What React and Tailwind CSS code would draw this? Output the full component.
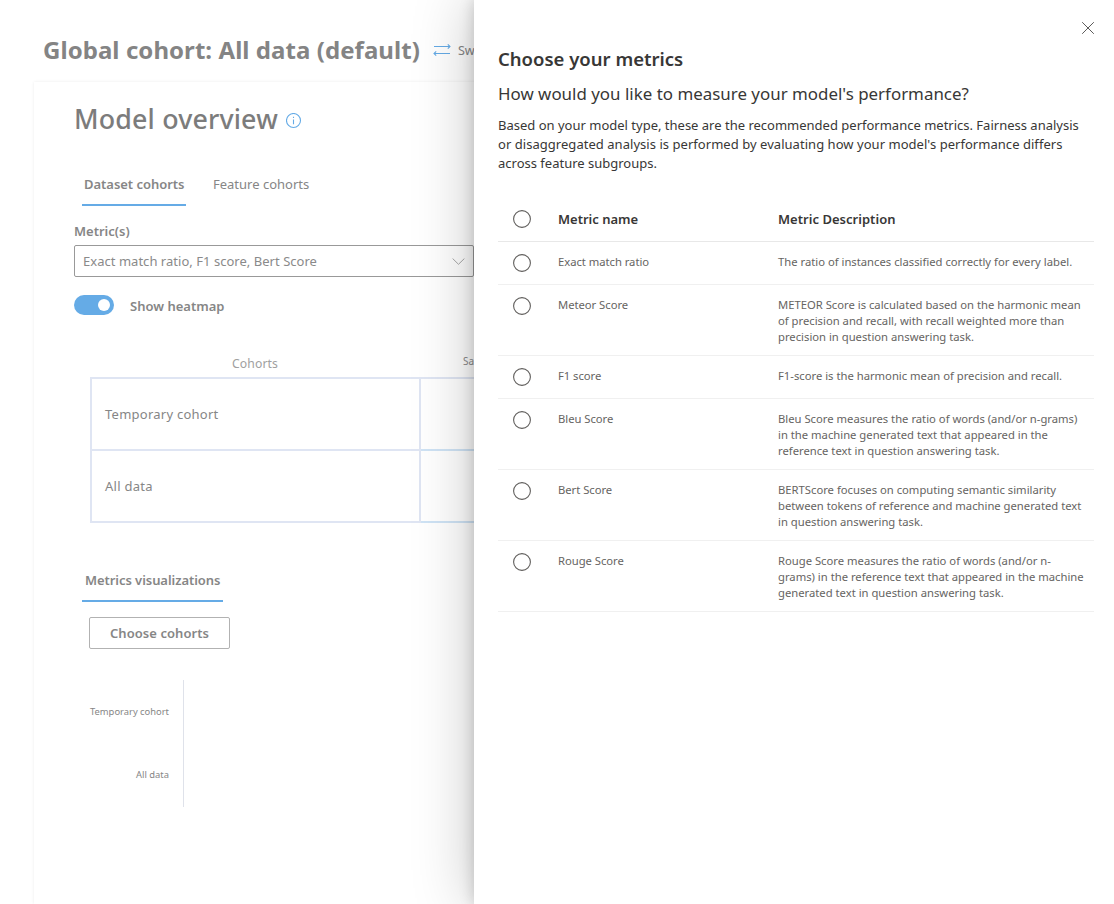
const metrics = [
  { name: 'Exact match ratio', lines: ['The ratio of instances classified correctly for every label.'] },
  {
    name: 'Meteor Score',
    lines: [
      'METEOR Score is calculated based on the harmonic mean',
      'of precision and recall, with recall weighted more than',
      'precision in question answering task.',
    ],
  },
  { name: 'F1 score', lines: ['F1-score is the harmonic mean of precision and recall.'] },
  {
    name: 'Bleu Score',
    lines: [
      'Bleu Score measures the ratio of words (and/or n-grams)',
      'in the machine generated text that appeared in the',
      'reference text in question answering task.',
    ],
  },
  {
    name: 'Bert Score',
    lines: [
      'BERTScore focuses on computing semantic similarity',
      'between tokens of reference and machine generated text',
      'in question answering task.',
    ],
  },
  {
    name: 'Rouge Score',
    lines: [
      'Rouge Score measures the ratio of words (and/or n-',
      'grams) in the reference text that appeared in the machine',
      'generated text in question answering task.',
    ],
  },
];

function Radio() {
  return (
    <svg className="ml-[15px] block h-[18px] w-[18px] shrink-0" viewBox="0 0 18 18" fill="none" stroke="#605e5c" strokeWidth="1.1">
      <circle cx="9" cy="9" r="8.4" />
    </svg>
  );
}

function CohortRow({ label }) {
  return (
    <div className="flex h-[72px]">
      <div className="flex w-[329px] items-center border-b-2 border-r-2 border-[#dfe5f3] pl-[13px] text-[13px] leading-5 tracking-[0.25px] text-[#868686]">
        {label}
      </div>
      <div className="flex-1 border-b-2 border-[#cfe3f5]" />
    </div>
  );
}

function Background() {
  return (
    <div className="w-[474px] shrink-0 overflow-hidden pl-[34px] pt-[34px] text-[#868686]">
      <div className="flex h-12 items-start whitespace-nowrap pl-[9px]">
        <h1 className="text-[24px] font-bold leading-8 tracking-[0.06px] text-[#848484]">Global cohort: All data (default)</h1>
        <svg className="ml-[13px] mt-[9px] h-[14px] w-[18px] shrink-0" viewBox="0 0 18 14" fill="none" stroke="#65abe6" strokeWidth="1.1">
          <path d="M1 3.5h16M14.8 1.3l2.2 2.2L14.8 5.7M17 10.5H1M3.2 8.3L1 10.5 3.2 12.7" />
        </svg>
        <span className="ml-[7px] mt-[7px] text-[12.6px] leading-5">Sw</span>
      </div>

      <div className="h-[822px] w-[900px] bg-white pl-10 pt-[19px] shadow-[0_0_3px_rgba(0,0,0,0.08)]">
        <div className="flex h-9 items-start">
          <h2 className="text-[26.8px] font-medium leading-9 tracking-[0.16px] text-[#7c7c7c]">Model overview</h2>
          <svg className="ml-2 mt-3 h-4 w-4" viewBox="0 0 16 16" fill="none" stroke="#65abe6" strokeWidth="1.1">
            <circle cx="7.5" cy="7.5" r="7" />
            <path d="M7.5 6.4v4.8M7.5 3.8v1.2" />
          </svg>
        </div>

        <div className="mt-[37px] flex h-8 pl-2 text-[13px] leading-5">
          <div className="w-[104px] border-b-2 border-[#65abe6] pl-0.5 font-semibold tracking-[-0.03px]">Dataset cohorts</div>
          <div className="ml-[27px]">Feature cohorts</div>
        </div>

        <div className="mt-[15px] text-[13px] font-semibold leading-5">Metric(s)</div>
        <div className="mt-1 flex h-8 w-[400px] items-center justify-between rounded-[2px] border border-[#999] pl-2 pr-2">
          <span className="text-[13px] leading-5 tracking-[0.03px] text-[#8a8a8a]">Exact match ratio, F1 score, Bert Score</span>
          <svg className="h-[7px] w-[13px]" viewBox="0 0 13 7" fill="none" stroke="#a8a8a8" strokeWidth="1">
            <path d="M0.6 0.5l5.9 5.8L12.4 0.5" />
          </svg>
        </div>

        <div className="mt-[18px] flex h-[21px] items-start">
          <div className="flex h-5 w-10 items-center justify-end rounded-full bg-[#65abe6] pr-1">
            <div className="h-3 w-3 rounded-full bg-white" />
          </div>
          <span className="ml-4 mt-px text-[13px] font-semibold leading-5">Show heatmap</span>
        </div>

        <div className="ml-4 mt-[39px] w-[700px]">
          <div className="flex h-[22px] items-start">
            <div className="w-[330px] pt-px text-center text-[12.2px] leading-4 tracking-[0.1px] text-[#a0a0a0]">Cohorts</div>
            <div className="pl-[43px] text-[10px] leading-[13px] text-[#8a8a8a]">Sa</div>
          </div>
          <div className="border-l-2 border-t-2 border-[#dfe5f3]">
            <CohortRow label="Temporary cohort" />
            <CohortRow label="All data" />
          </div>
        </div>

        <div className="ml-2 mt-[47px] h-8 w-[141px] border-b-2 border-[#65abe6] pl-[3px] text-[13px] font-semibold leading-5 tracking-[-0.06px]">
          Metrics visualizations
        </div>
        <div className="ml-[15px] mt-[15px] flex h-8 w-[141px] items-center justify-center rounded-[2px] border border-[#b2b2b2] text-[13px] font-semibold leading-5 tracking-[0.06px]">
          Choose cohorts
        </div>

        <div className="mt-[31px] flex h-[127px] w-[110px] flex-col items-end border-r border-[#dfe2ea] pr-[14px] pt-[25px] text-[9.4px] leading-[13px]">
          <span className="h-[63px]">Temporary cohort</span>
          <span>All data</span>
        </div>
      </div>
    </div>
  );
}

function MetricsPanel() {
  return (
    <aside className="relative z-10 flex w-[640px] shrink-0 flex-col bg-white pl-6 pr-5 text-[#383736] shadow-[0_0_58px_rgba(0,0,0,0.24),0_0_14px_rgba(0,0,0,0.18)]">
      <div className="flex h-[47px] justify-end pt-[22px]">
        <svg className="h-3 w-3" viewBox="0 0 12 12" fill="none" stroke="#5c5b5a" strokeWidth="1">
          <path d="M0.2 0.2l11.6 11.6M11.8 0.2L0.2 11.8" />
        </svg>
      </div>
      <h2 className="text-[18.5px] font-semibold leading-6">Choose your metrics</h2>
      <h3 className="mt-[11px] text-[16.9px] leading-6 tracking-[0.01px]">How would you like to measure your model&apos;s performance?</h3>
      <p className="mt-[10px] whitespace-nowrap text-[13px] leading-[19px]">
        Based on your model type, these are the recommended performance metrics. Fairness analysis
        <br />
        <span className="tracking-[0.04px]">or disaggregated analysis is performed by evaluating how your model&apos;s performance differs</span>
        <br />
        across feature subgroups.
      </p>

      <div className="mt-[25px] flex h-[44px] items-center border-b border-[#e8e8e8] pb-[2px] text-[13px] font-semibold leading-5">
        <Radio />
        <div className="ml-[27px] w-[220px]">Metric name</div>
        <div className="tracking-[0.03px]">Metric Description</div>
      </div>
      {metrics.map((m) => (
        <div key={m.name} className="flex min-h-[43px] items-start border-b border-[#f0f0f0] pb-[10px] pt-3 text-[11.25px] leading-4 text-[#666462]">
          <Radio />
          <div className="ml-[27px] w-[220px] tracking-[-0.03px]">{m.name}</div>
          <div className="whitespace-nowrap">
            {m.lines.map((line) => (
              <div key={line}>{line}</div>
            ))}
          </div>
        </div>
      ))}
    </aside>
  );
}

export default function App() {
  return (
    <div className="flex h-[904px] w-[1114px] overflow-hidden bg-white font-['Noto_Sans','Open_Sans',sans-serif]">
      <Background />
      <MetricsPanel />
    </div>
  );
}
